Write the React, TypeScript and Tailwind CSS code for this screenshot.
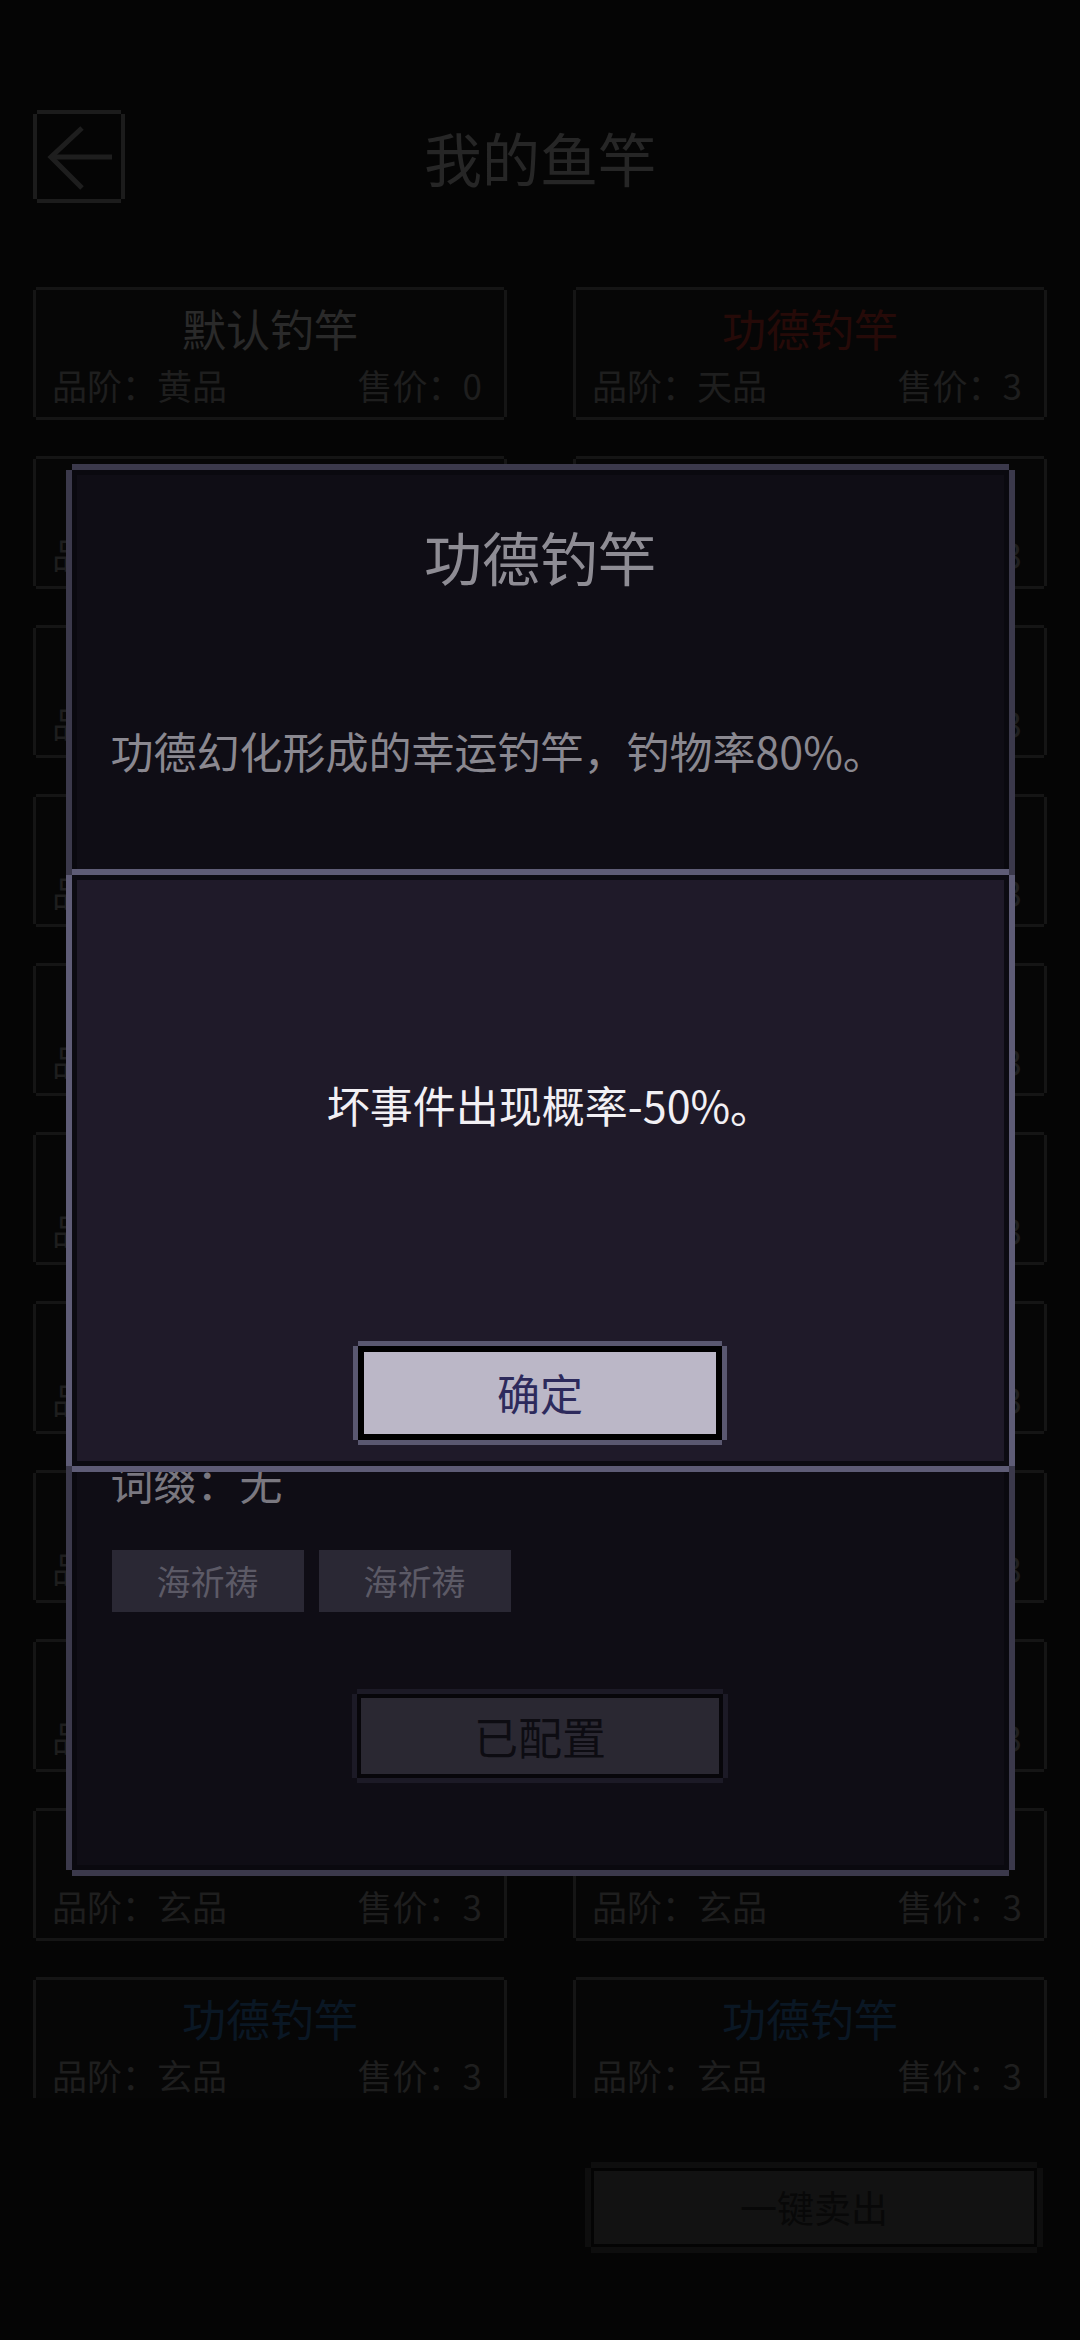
import React from "react";

type Rod = {
  name: string;
  grade: string;
  price: number;
  nameColor: string;
};

const rods: Rod[] = [
  { name: "默认钓竿", grade: "黄品", price: 0, nameColor: "text-[#2a2a2a]" },
  { name: "功德钓竿", grade: "天品", price: 3, nameColor: "text-[#260a08]" },
  ...Array.from({ length: 20 }, () => ({
    name: "功德钓竿",
    grade: "玄品",
    price: 3,
    nameColor: "text-[#0a1724]",
  })),
];

// pixel-style borders: four offset shadows leave the corners notched
const cardEdge =
  "shadow-[0_-3px_0_0_#151515,0_3px_0_0_#151515,-3px_0_0_0_#151515,3px_0_0_0_#151515]";
const backEdge =
  "shadow-[0_-4px_0_0_#1c1c1c,0_4px_0_0_#1c1c1c,-4px_0_0_0_#1c1c1c,4px_0_0_0_#1c1c1c]";

const RodCard = ({ rod }: { rod: Rod }) => (
  <div className={`flex h-[127px] flex-col bg-[#060606] ${cardEdge}`}>
    <div className={`pt-[16px] text-center text-[44px] leading-none ${rod.nameColor}`}>
      {rod.name}
    </div>
    <div className="mt-auto mb-[15px] flex justify-between pl-[16px] pr-[22px] text-[35px] leading-none text-[#1e1e1e]">
      <span>品阶：{rod.grade}</span>
      <span>售价：{rod.price}</span>
    </div>
  </div>
);

const DetailDialog = () => (
  <div className="absolute inset-0 flex items-center justify-center">
    <div className="flex h-[1400px] w-[937px] flex-col border-[5px] border-[#0a090f] bg-[#0f0d15] shadow-[0_-6px_0_0_#3b394b,0_6px_0_0_#3b394b,-6px_0_0_0_#3b394b,6px_0_0_0_#3b394b]">
      <h2 className="pt-[52px] text-center text-[58px] leading-none text-[#8e8c94]">功德钓竿</h2>
      <p className="mt-[144px] pl-[34px] text-[43px] leading-none text-[#8a8890]">
        功德幻化形成的幸运钓竿，钓物率80%。
      </p>
      <p className="mt-[688px] pl-[34px] text-[43px] leading-none text-[#7a7880]">词缀：无</p>
      <div className="mt-[47px] flex gap-[15px] pl-[35px]">
        {["海祈祷", "海祈祷"].map((tag, i) => (
          <span
            key={i}
            className="flex h-[62px] w-[192px] items-center justify-center bg-[#2a2834] text-[34px] leading-none text-[#5c5a66]"
          >
            {tag}
          </span>
        ))}
      </div>
      <div className="mt-[82px] flex justify-center">
        <button className="flex h-[84px] w-[366px] items-center justify-center border-[4px] border-[#07060a] bg-[#2a2832] text-[44px] leading-none text-[#0d0c12] shadow-[0_-5px_0_0_#1c1a26,0_5px_0_0_#1c1a26,-5px_0_0_0_#1c1a26,5px_0_0_0_#1c1a26]">
          已配置
        </button>
      </div>
    </div>
  </div>
);

const EffectDialog = () => (
  <div className="absolute inset-0 flex items-center justify-center">
    <div className="flex h-[591px] w-[937px] flex-col items-center border-[5px] border-[#0c0b12] bg-[#1f1a29] shadow-[0_-6px_0_0_#5e5c76,0_6px_0_0_#5e5c76,-6px_0_0_0_#5e5c76,6px_0_0_0_#5e5c76]">
      <p className="pt-[203px] pl-[20px] text-[43px] leading-none text-[#f2f0f4]">坏事件出现概率-50%。</p>
      <button className="mt-[220px] flex h-[94px] w-[364px] items-center justify-center border-[6px] border-black bg-[#bbb7c7] text-[43px] leading-none text-[#2d2a5c] shadow-[0_-5px_0_0_#5a5870,0_5px_0_0_#5a5870,-5px_0_0_0_#5a5870,5px_0_0_0_#5a5870]">
        确定
      </button>
    </div>
  </div>
);

export default function App() {
  return (
    <div className="relative h-[2340px] w-[1080px] overflow-hidden bg-[#050505] font-['Noto_Sans_CJK_SC',sans-serif]">
      <header className="flex items-center justify-between px-[37px] pt-[114px]">
        <button className={`h-[85px] w-[84px] ${backEdge}`}>
          <svg viewBox="0 0 84 85" className="h-full w-full" fill="none" stroke="#1e1e1e" strokeWidth={5}>
            <path d="M45 14 L14 43 L45 74" />
            <path d="M14 43 H75" />
          </svg>
        </button>
        <h1 className="text-[58px] leading-none text-[#262626]">我的鱼竿</h1>
        <div className="w-[84px]" />
      </header>

      <div className="mt-[88px] h-[1811px] overflow-hidden px-[36px] pt-[3px]">
        <div className="grid grid-cols-2 gap-x-[72px] gap-y-[42px]">
          {rods.map((rod, i) => (
            <RodCard key={i} rod={rod} />
          ))}
        </div>
      </div>

      <div className="mt-[70px] flex justify-end pr-[43px]">
        <button className="flex h-[79px] w-[446px] items-center justify-center border-[3px] border-[#040404] bg-[#121212] text-[37px] leading-none text-[#080808] shadow-[0_-6px_0_0_#0e0e0e,0_6px_0_0_#0e0e0e,-6px_0_0_0_#0e0e0e,6px_0_0_0_#0e0e0e]">
          一键卖出
        </button>
      </div>

      <DetailDialog />
      <EffectDialog />
    </div>
  );
}
